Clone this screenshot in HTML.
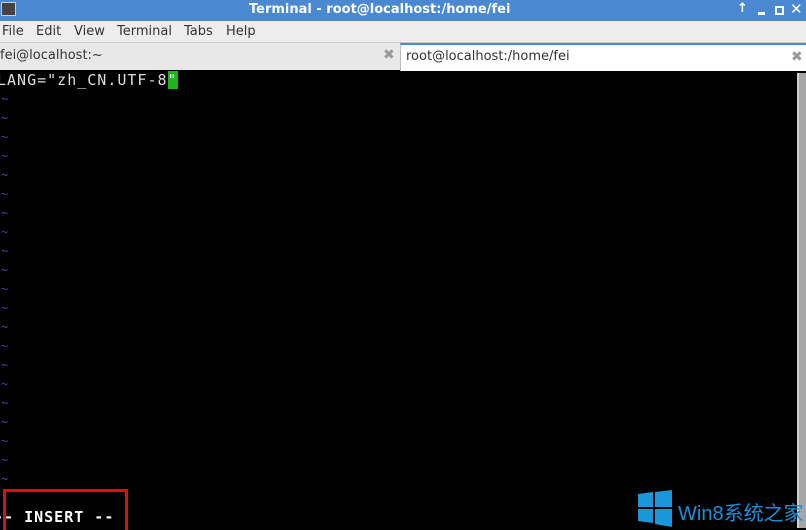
<!DOCTYPE html>
<html><head><meta charset="utf-8"><style>
*{margin:0;padding:0;box-sizing:border-box}
body{width:806px;height:530px;overflow:hidden;background:#000;font-family:"DejaVu Sans","Liberation Sans",sans-serif;position:relative}
.t{position:absolute;white-space:nowrap}
#title{left:0;top:0;width:806px;height:21px;background:#4a89d2}
#menu{left:0;top:21px;width:806px;height:21px;background:#ededed;font-size:13px;color:#333}
#tabs{left:0;top:42px;width:806px;height:28px;background:#e8e8e8;border-top:1px solid #ccc}
.mono{font-family:"DejaVu Sans Mono","Liberation Mono",monospace;font-size:15px;color:#ddd;letter-spacing:1px}
.tl{position:absolute;left:1px;color:#4a3fb0;font-size:12px;font-family:"DejaVu Sans Mono",monospace}
</style></head><body>
<div class="t" id="title">
 <div class="t" style="left:1px;top:2px;width:15px;height:14px;border:1px solid #ccc;background:#444"></div>
 <div class="t" style="left:249px;top:2px;font-size:13px;color:#fff;font-weight:bold">Terminal - root@localhost:/home/fei</div>
 <div class="t" style="left:737px;top:1px;font-size:13px;color:#fff;font-weight:bold">↑</div>
 <div class="t" style="left:758px;top:12px;width:7px;height:3px;background:#fff"></div>
 <div class="t" style="left:775px;top:6px;width:9px;height:9px;border:2px solid #fff"></div>
 <div class="t" style="left:790px;top:0px;font-size:15px;color:#fff;font-weight:bold">✕</div>
</div>
<div class="t" id="menu">
 <span class="t" style="left:2px;top:3px">File</span>
 <span class="t" style="left:36px;top:3px">Edit</span>
 <span class="t" style="left:74px;top:3px">View</span>
 <span class="t" style="left:117px;top:3px">Terminal</span>
 <span class="t" style="left:184px;top:3px">Tabs</span>
 <span class="t" style="left:226px;top:3px">Help</span>
</div>
<div class="t" id="tabs">
 <span class="t" style="left:0;top:5px;font-size:13px;color:#333">fei@localhost:~</span>
 <span class="t" style="left:383px;top:4px;font-size:14px;color:#999;font-weight:bold">✖</span>
 <div class="t" style="left:400px;top:0;width:406px;height:28px;background:#fff;border-top:2px solid #4a89d2;border-left:1px solid #bbb">
  <span class="t" style="left:5px;top:4px;font-size:13px;color:#333">root@localhost:/home/fei</span>
  <span class="t" style="left:390px;top:4px;font-size:14px;color:#999;font-weight:bold">✖</span>
 </div>
</div>
<div class="t mono" style="left:-3px;top:71px;">LANG="zh_CN.UTF-8<span style="background:#1fb31f;color:#fff">"</span></div>
<div id="tl"></div>
<div class="t" style="left:797px;top:73px;width:9px;height:455px;background:#a6a6a6;border-left:2px solid #cfcfcf"></div>
<div class="t" style="left:3px;top:489px;width:125px;height:41px;border:3px solid #e00d0d;border-bottom:none"></div>
<div class="t mono" style="left:-6px;top:508px;color:#fff;font-weight:bold;font-size:15px">-- INSERT --</div>
<svg class="t" style="left:638px;top:490px" width="36" height="37"><polygon points="0,4 15,2 15,17 0,17" fill="#1a96db"/><polygon points="17,2 34,0 34,17 17,17" fill="#1a96db"/><polygon points="0,19 15,19 15,33 0,31" fill="#1a96db"/><polygon points="17,19 34,19 34,37 17,34" fill="#1a96db"/></svg>
<div class="t" style="left:678px;top:497px;font-size:20px;color:#1a8fd6;font-family:'Liberation Sans','Noto Sans CJK SC',sans-serif">Win8系统之家</div>
<script>
var h='';for(var y=92;y<=477;y+=19)h+='<div class="tl" style="top:'+y+'px">~</div>';document.getElementById('tl').innerHTML=h;
</script>
</body></html>
